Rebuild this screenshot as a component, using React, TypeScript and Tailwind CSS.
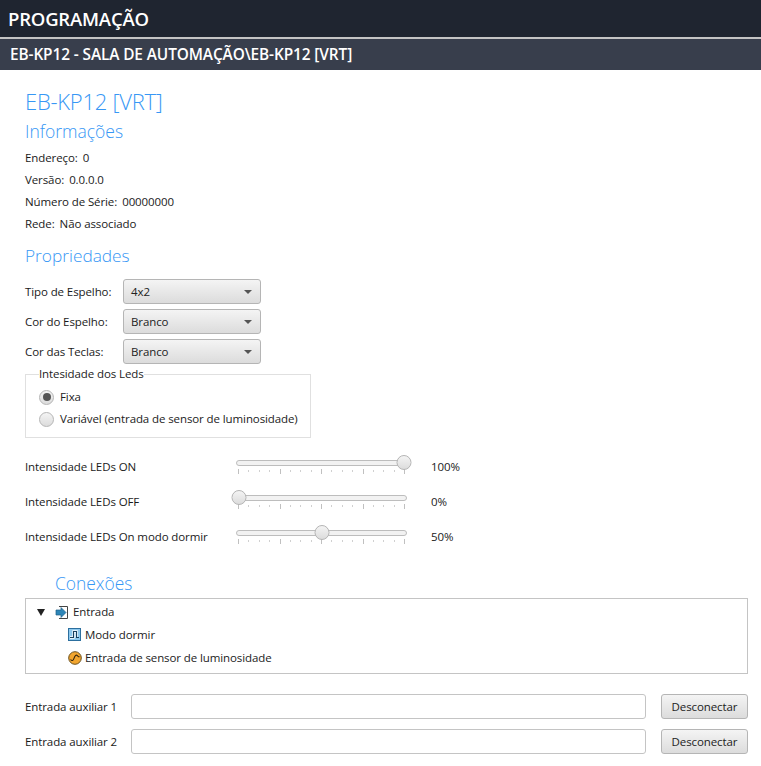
const font = "font-['Open_Sans','Noto_Sans',sans-serif]";
const gradient = 'bg-gradient-to-b from-[#f4f4f4] to-[#dcdcdc] border border-[#b5b5b5]';

function InfoRow({ label, value }: { label: string; value: string }) {
  return (
    <div className="flex h-[22px] items-center gap-[5px] text-[11.5px] tracking-[-0.1px] text-[#1a1a1a]">
      <span>{label}</span>
      <span>{value}</span>
    </div>
  );
}

function SelectRow({ label, value }: { label: string; value: string }) {
  return (
    <div className="flex h-[25px] items-center">
      <span className="w-[98px] text-[11.5px] tracking-[-0.1px] text-[#1a1a1a]">{label}</span>
      <div className={`flex h-[25px] w-[138px] items-center justify-between rounded-[3px] pl-[7px] pr-[8px] text-[11.5px] tracking-[-0.1px] text-[#222] ${gradient}`}>
        <span>{value}</span>
        <span className="h-0 w-0 border-x-[4px] border-t-[4px] border-x-transparent border-t-[#555]" />
      </div>
    </div>
  );
}

function Radio({ label, checked }: { label: string; checked?: boolean }) {
  return (
    <div className="flex h-[22px] items-center gap-[6px] text-[11.5px] tracking-[-0.1px] text-[#222]">
      <span className={`flex h-[15px] w-[15px] items-center justify-center rounded-full ${gradient}`}>
        {checked && <span className="h-[8px] w-[8px] rounded-full bg-[#555]" />}
      </span>
      <span>{label}</span>
    </div>
  );
}

function SliderRow({ label, value, percent }: { label: string; value: string; percent: number }) {
  return (
    <div className="flex h-[35px] items-center text-[11.5px] tracking-[-0.1px] text-[#1a1a1a]">
      <span className="w-[211px]">{label}</span>
      <div className="relative h-[26px] w-[171px]">
        <div className="mt-[6px] h-[6px] rounded-full border border-[#bdbdbd] bg-[#f2f2f2]" />
        <div className="mt-[3px] flex justify-between px-[2px]">
          {Array.from({ length: 17 }).map((_, i) => (
            <span key={i} className={`w-px ${i % 4 === 0 ? 'h-[5px] bg-[#c0c0c0]' : 'mt-[1px] h-[2px] bg-[#d0d0d0]'}`} />
          ))}
        </div>
        <span
          className={`absolute top-[1px] h-[15px] w-[15px] -translate-x-1/2 rounded-full ${gradient}`}
          style={{ left: `${3 + percent * 1.65}px` }}
        />
      </div>
      <span className="ml-[24px]">{value}</span>
    </div>
  );
}

function AuxRow({ label }: { label: string }) {
  return (
    <div className="flex h-[25px] items-center">
      <span className="w-[106px] text-[11.5px] tracking-[-0.1px] text-[#1a1a1a]">{label}</span>
      <div className="h-[25px] w-[515px] rounded-[3px] border border-[#c4c4c4] bg-white" />
      <button className={`ml-[15px] h-[25px] w-[87px] rounded-[3px] text-[11.5px] tracking-[-0.1px] text-[#222] ${gradient}`}>
        Desconectar
      </button>
    </div>
  );
}

function EntradaIcon() {
  return (
    <svg width="14" height="15" viewBox="0 0 14 15">
      <path d="M4 1.5h8.5v12H4" fill="#fff" stroke="#444" />
      <path d="M1 5h5V2.5L11 7.5l-5 5V10H1z" fill="#2e86b8" stroke="#1c5f88" strokeWidth="0.7" />
    </svg>
  );
}

function PulseIcon() {
  return (
    <svg width="13" height="13" viewBox="0 0 13 13">
      <rect x="0.5" y="0.5" width="12" height="12" fill="#8cc8ee" stroke="#2c6f9e" />
      <path d="M2 9.5h3.5v-6h3v6" fill="none" stroke="#fff" strokeWidth="2.4" />
      <path d="M2 9.5h3.5v-6h3v6H11" fill="none" stroke="#17405f" strokeWidth="1.1" />
    </svg>
  );
}

function WaveIcon() {
  return (
    <svg width="14" height="14" viewBox="0 0 14 14">
      <circle cx="7" cy="7" r="6.3" fill="#f2a52e" stroke="#6b5220" />
      <path d="M2.5 8.5c1.5 1.8 2.8 1 3.5-1.2s2-4 3.4-2.7c.7.7 1.2 1.3 2.2 1.2" fill="none" stroke="#33240c" strokeWidth="1.1" />
    </svg>
  );
}

export default function App() {
  return (
    <div className={`h-[766px] w-[761px] overflow-hidden bg-white ${font}`}>
      <header className="flex h-[37px] items-center bg-[#1f2530] px-[8px] text-[18.5px] font-semibold tracking-[-0.2px] text-white">
        PROGRAMAÇÃO
      </header>
      <div className="h-[2px] bg-[#c4c4c4]" />
      <div className="flex h-[31px] items-center bg-[#383e4c] px-[10px] text-[15.4px] font-semibold tracking-[-0.1px] text-white">
        EB-KP12 - SALA DE AUTOMAÇÃO\EB-KP12 [VRT]
      </div>

      <main className="pl-[25px] pr-[13px]">
        <h1 className="mt-[16px] h-[30px] text-[22px] font-light leading-[30px] tracking-[-0.25px] text-[#3797f5]">EB-KP12 [VRT]</h1>
        <h2 className="mt-[2px] h-[26px] text-[17.5px] font-light leading-[26px] text-[#3797f5]">Informações</h2>

        <div className="mt-[3px]">
          <InfoRow label="Endereço:" value="0" />
          <InfoRow label="Versão:" value="0.0.0.0" />
          <InfoRow label="Número de Série:" value="00000000" />
          <InfoRow label="Rede:" value="Não associado" />
        </div>

        <h2 className="mt-[8px] h-[26px] text-[17.3px] font-light leading-[26px] text-[#3797f5]">Propriedades</h2>

        <div className="mt-[10px] flex flex-col gap-[5px]">
          <SelectRow label="Tipo de Espelho:" value="4x2" />
          <SelectRow label="Cor do Espelho:" value="Branco" />
          <SelectRow label="Cor das Teclas:" value="Branco" />
        </div>

        <fieldset className="mt-[3px] h-[71px] w-[286px] border border-[#e0e0e0] pl-[13px]">
          <legend className="px-0 text-[11.5px] leading-[14px] tracking-[-0.1px] text-[#222]">Intesidade dos Leds</legend>
          <div className="mt-[5px]">
            <Radio label="Fixa" checked />
            <Radio label="Variável (entrada de sensor de luminosidade)" />
          </div>
        </fieldset>

        <div className="mt-[11px]">
          <SliderRow label="Intensidade LEDs ON" value="100%" percent={100} />
          <SliderRow label="Intensidade LEDs OFF" value="0%" percent={0} />
          <SliderRow label="Intensidade LEDs On modo dormir" value="50%" percent={50} />
        </div>

        <h2 className="ml-[30px] mt-[16px] h-[26px] text-[17.4px] font-light leading-[26px] text-[#3797f5]">Conexões</h2>

        <div className="mt-[2px] h-[76px] border border-[#c4c4c4] pt-[2px] text-[11.5px] tracking-[-0.1px] text-[#222]">
          <div className="flex h-[22px] items-center pl-[11px]">
            <span className="h-0 w-0 border-x-[4px] border-t-[7px] border-x-transparent border-t-[#222]" />
            <span className="ml-[10px]"><EntradaIcon /></span>
            <span className="ml-[4px]">Entrada</span>
          </div>
          <div className="flex h-[23px] items-center gap-[4px] pl-[42px]">
            <PulseIcon />
            <span>Modo dormir</span>
          </div>
          <div className="flex h-[23px] items-center gap-[3px] pl-[42px]">
            <WaveIcon />
            <span>Entrada de sensor de luminosidade</span>
          </div>
        </div>

        <div className="mt-[20px] flex flex-col gap-[10px]">
          <AuxRow label="Entrada auxiliar 1" />
          <AuxRow label="Entrada auxiliar 2" />
        </div>
      </main>
    </div>
  );
}
